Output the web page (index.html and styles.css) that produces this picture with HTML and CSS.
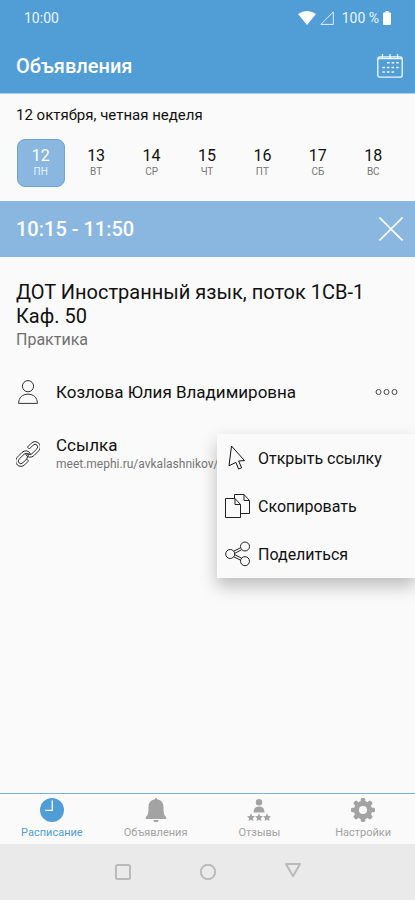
FILE: index.html
```html
<!DOCTYPE html>
<html lang="ru">
<head>
<meta charset="utf-8">
<meta name="viewport" content="width=device-width, initial-scale=1">
<title>Объявления</title>
<link rel="stylesheet" href="styles.css">
</head>
<body>
<header class="header">
  <div class="status">
    <span>10:00</span>
    <div class="status-right">
      <svg width="18" height="14" viewBox="0 0 18 14" fill="#fff"><path d="M0 3Q9-3 18 3L9 14Z"/></svg>
      <svg width="14" height="14" viewBox="0 0 14 14" fill="none" stroke="#e2f1fa"><path d="M13.3 .9V13.4H.9Z"/></svg>
      <span class="percent">100 %</span>
      <svg width="8" height="14" viewBox="0 0 8 14" fill="#fff"><path d="M2.500 0h3v1.500H7a1 1 0 0 1 1 1V13a1 1 0 0 1-1 1H1a1 1 0 0 1-1-1V2.500a1 1 0 0 1 1-1h1.500z"/></svg>
    </div>
  </div>
  <div class="appbar">
    <h1>Объявления</h1>
    <button class="icon-button" aria-label="Календарь">
      <svg width="26" height="24" viewBox="0 0 26 24" fill="none" stroke="#eef8fd" stroke-width="1.300"><rect x=".8" y="2.800" width="24.400" height="20.400" rx="2"/><path d="M5.500 0v5M13 0v5M20.500 0v5M1 4.500h24"/><path stroke-width="1.600" stroke-dasharray="2.600 2" d="M10 8.800h12M5.300 13.500h17M5.300 18h12"/></svg>
    </button>
  </div>
</header>

<section class="calendar">
  <h2>12 октября, четная неделя</h2>
  <div class="week">
    <button class="day selected"><span>12</span><small>ПН</small></button>
    <button class="day"><span>13</span><small>ВТ</small></button>
    <button class="day"><span>14</span><small>СР</small></button>
    <button class="day"><span>15</span><small>ЧТ</small></button>
    <button class="day"><span>16</span><small>ПТ</small></button>
    <button class="day"><span>17</span><small>СБ</small></button>
    <button class="day"><span>18</span><small>ВС</small></button>
  </div>
</section>

<div class="timebar">
  <h2>10:15 - 11:50</h2>
  <button class="icon-button" aria-label="Закрыть">
    <svg width="24" height="24" viewBox="0 0 24 24" stroke="#fff" stroke-width="1.600"><path d="M.5.500l23 23M23.500.500l-23 23"/></svg>
  </button>
</div>

<main class="lesson">
  <h3>ДОТ Иностранный язык, поток 1СВ-1<br>Каф. 50</h3>
  <p class="kind">Практика</p>

  <div class="row teacher">
    <svg width="24" height="24" viewBox="0 0 24 24" fill="none" stroke="#333"><circle cx="12" cy="6.200" r="5.600"/><path d="M2.600 23.400c0-5.800 3.800-9.200 9.400-9.200s9.400 3.400 9.400 9.200z"/></svg>
    <span class="row-title">Козлова Юлия Владимировна</span>
    <button class="icon-button" aria-label="Ещё">
      <svg width="24" height="8" viewBox="0 0 24 8" fill="none" stroke="#444"><circle cx="3.500" cy="4" r="2.500"/><circle cx="11.500" cy="4" r="2.500"/><circle cx="19.500" cy="4" r="2.500"/></svg>
    </button>
  </div>

  <div class="row link">
    <svg width="24" height="26" viewBox="0 0 24 26" fill="none" stroke="#222" stroke-width=".9"><g transform="rotate(-45 12 13)"><path d="M7.500 18.300H2a5.300 5.300 0 0 1 0-10.600H9a5.300 5.300 0 0 1 5.200 6.300M11.500 14A2.600 2.600 0 0 0 9 10.400H2a2.600 2.600 0 0 0 0 5.200H7.500zM14.200 14H11.500M7.500 15.600v2.700"/><path d="M16.500 7.700H22a5.300 5.300 0 0 1 0 10.600H15a5.300 5.300 0 0 1-5.200-6.300M12.500 12A2.600 2.600 0 0 0 15 15.600h7a2.600 2.600 0 0 0 0-5.200H16.500M9.800 12h2.700M16.500 10.400V7.700"/></g></svg>
    <div>
      <div class="row-title">Ссылка</div>
      <a class="url" href="#">meet.mephi.ru/avkalashnikov/</a>
    </div>
    <div class="menu">
      <button class="menu-item">
        <svg width="26" height="26" viewBox="0 0 26 26" fill="none" stroke="#111"><path d="M6.500 1L19.500 15.600 13.600 16 16.600 22.800 13.600 24 10.900 17.400 4 20.800z"/></svg>
        Открыть ссылку
      </button>
      <button class="menu-item">
        <svg width="26" height="26" viewBox="0 0 26 26" fill="none" stroke="#222"><path d="M.5 5.500h9.500l5.500 6V24.500H.5zM10 5.500v6h5.500"/><path d="M9.500 5.500V1.500H19l5.500 6V20.500h-9M19 1.500v6h5.500"/></svg>
        Скопировать
      </button>
      <button class="menu-item">
        <svg width="26" height="26" viewBox="0 0 26 26" fill="none" stroke="#222"><circle cx="5.200" cy="13" r="4.500"/><circle cx="20" cy="5.500" r="4.500"/><circle cx="20" cy="20.200" r="4.500"/><path d="M8.800 10.200l6.800-3.400M9.700 12.400l6.800-3.600M9.700 13.600l6.800 3.600M8.800 15.800l6.800 3.400"/></svg>
        Поделиться
      </button>
    </div>
  </div>
</main>

<nav class="tabs">
  <a class="tab active" href="#">
    <svg width="24" height="24" viewBox="0 0 24 24"><circle cx="12" cy="12" r="12" fill="#4f9ed8"/><path d="M12.300 2.500V12.300H5.200" fill="none" stroke="#fff" stroke-width="1.300"/></svg>
    Расписание
  </a>
  <a class="tab" href="#">
    <svg width="24" height="24" viewBox="0 0 24 24" fill="#a3a3a3"><path d="M10.800 1.200a1.200 1.200 0 0 1 2.400 0C17.500 2 19.500 5 19.500 9c0 6 .3 8 2.700 10v2H1.800v-2c2.400-2 2.700-4 2.700-10 0-4 2-7 6.300-7.800zM9.500 22h5a2.500 2.500 0 0 1-5 0z"/></svg>
    Объявления
  </a>
  <a class="tab" href="#">
    <svg width="24" height="24" viewBox="0 0 24 24" fill="#a3a3a3"><circle cx="12" cy="4.300" r="3.200"/><path d="M6.500 14.500c0-4 2-6 5.500-6s5.500 2 5.500 6z"/><path id="star" d="M4 15.300l1.200 2.600 2.800.3-2.100 2 .6 2.900L4 21.700l-2.500 1.400.6-2.900-2.100-2 2.800-.3z"/><use href="#star" x="8"/><use href="#star" x="16"/></svg>
    Отзывы
  </a>
  <a class="tab" href="#">
    <svg width="24" height="24" viewBox="0 0 24 24"><g fill="#a3a3a3"><circle cx="12" cy="12" r="9.200"/><g id="teeth"><rect x="9.700" y="0" width="4.600" height="24" rx="1.400"/><rect x="0" y="9.700" width="24" height="4.600" rx="1.400"/></g><use href="#teeth" transform="rotate(45 12 12)"/></g><circle cx="12" cy="12" r="4" fill="#fafafa"/></svg>
    Настройки
  </a>
</nav>

<footer class="system">
  <button class="icon-button" aria-label="Недавние"><svg width="18" height="18" viewBox="0 0 18 18" fill="none" stroke="#bababa" stroke-width="2"><rect x="2" y="2" width="14" height="14" rx="1.500"/></svg></button>
  <button class="icon-button" aria-label="Домой"><svg width="18" height="18" viewBox="0 0 18 18" fill="none" stroke="#bababa" stroke-width="2"><circle cx="9" cy="9" r="7.200"/></svg></button>
  <button class="icon-button" aria-label="Назад"><svg width="18" height="18" viewBox="0 0 18 18" fill="none" stroke="#bababa" stroke-width="2" stroke-linejoin="round"><path d="M2 1h14L9 13.200z"/></svg></button>
</footer>
</body>
</html>
```
FILE: styles.css
```css
* {
  box-sizing: border-box;
}

body {
  margin: 0;
  min-height: 100vh;
  display: flex;
  flex-direction: column;
  background: #fafafa;
  color: #111;
  font-family: Roboto, "Noto Sans", sans-serif;
}

h1, h2, h3, p {
  margin: 0;
}

button {
  margin: 0;
  padding: 0;
  border: 0;
  background: none;
  color: inherit;
  font: inherit;
}

a {
  color: inherit;
  text-decoration: none;
}

svg {
  display: block;
  flex: none;
}

.header {
  background: #519dd6;
  color: #fff;
}

.status {
  height: 36px;
  padding: 0 24px;
  display: flex;
  align-items: center;
  justify-content: space-between;
  font-size: 14px;
  color: #e8f5fc;
}

.status-right {
  display: flex;
  align-items: center;
  gap: 4px;
}

.percent {
  margin-left: 4px;
}

.appbar {
  height: 58px;
  padding: 2px 12px 0 16px;
  display: flex;
  align-items: center;
  justify-content: space-between;
  border-bottom: 1px solid #a5d0ee;
}

.appbar h1,
.timebar h2 {
  font-size: 20px;
  line-height: 24px;
  font-weight: 500;
}

.calendar {
  padding: 12px 14px 14px 13px;
}

.calendar h2 {
  padding-left: 3px;
  font-size: 15px;
  line-height: 18px;
  font-weight: 400;
}

.week {
  margin-top: 15px;
  display: grid;
  grid-template-columns: repeat(7, 1fr);
  justify-items: center;
}

.day {
  width: 48px;
  height: 48px;
  display: flex;
  flex-direction: column;
  align-items: center;
  justify-content: center;
  border-radius: 8px;
  font-size: 16px;
  line-height: 18px;
}

.day small {
  font-size: 10px;
  line-height: 14px;
  color: #777;
}

.day.selected {
  background: #8ab7e0;
  border: 1px solid #6ba5d6;
  color: #fff;
}

.day.selected small {
  color: #e8f3fb;
}

.timebar {
  height: 56px;
  padding: 0 12px 0 16px;
  display: flex;
  align-items: center;
  justify-content: space-between;
  background: #8ab7e0;
  color: #fff;
}

.lesson {
  flex: 1;
  padding: 23px 0 0 16px;
}

.lesson h3 {
  font-size: 20px;
  line-height: 24px;
  font-weight: 400;
}

.kind {
  margin-top: 3px;
  font-size: 16px;
  line-height: 18px;
  color: #707070;
}

.row {
  display: flex;
  align-items: center;
  gap: 16px;
}

.row-title {
  font-size: 17px;
  line-height: 20px;
}

.teacher {
  margin-top: 31px;
  height: 24px;
  padding-right: 16px;
}

.teacher .icon-button {
  margin-left: auto;
}

.link {
  position: relative;
  margin-top: 30px;
  height: 40px;
}

.url {
  display: block;
  font-size: 12px;
  line-height: 18px;
  color: #777;
}

.menu {
  position: absolute;
  top: 0;
  right: 0;
  width: 198px;
  background: #fafafa;
  box-shadow: 0 8px 16px rgba(0, 0, 0, 0.25);
}

.menu-item {
  width: 100%;
  height: 48px;
  padding-left: 8px;
  display: flex;
  align-items: center;
  gap: 7px;
  font-size: 16px;
}

.tabs {
  border-top: 1px solid #7db4de;
  height: 51px;
  padding-top: 4px;
  display: grid;
  grid-template-columns: repeat(4, 1fr);
}

.tab {
  display: flex;
  flex-direction: column;
  align-items: center;
  gap: 4px;
  font-size: 11px;
  line-height: 14px;
  color: #a3a3a3;
}

.tab.active {
  color: #519dd6;
}

.system {
  height: 56px;
  display: flex;
  align-items: center;
  justify-content: center;
  gap: 67px;
  background: #eaeaea;
}
```
